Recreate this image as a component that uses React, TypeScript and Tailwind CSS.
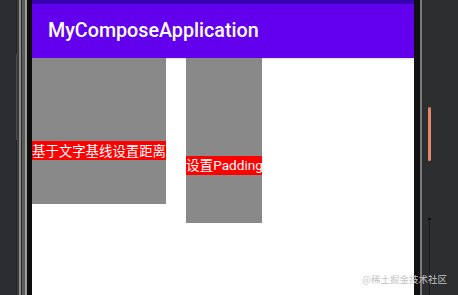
import React from "react";

export default function App() {
  return (
    <div className="relative flex h-[295px] w-[458px] overflow-hidden bg-[#2b2d30]">
      {/* left bezel */}
      <div className="flex h-full w-[32px] shrink-0">
        <div className="w-[16px] bg-[#2b2d30]" />
        <div className="flex w-[1px] flex-col">
          <div className="h-[54px] bg-[#232427]" />
          <div className="h-[86px] bg-[#4a4c4f]" />
          <div className="flex-1 bg-[#232427]" />
        </div>
        <div className="w-[2px] bg-[#3a3b3d]" />
        <div className="w-[2px] bg-[#8a8a8a]" />
        <div className="w-[1px] bg-[#2a2a2a]" />
        <div className="w-[3px] bg-[#5c5c5c]" />
        <div className="w-[2px] bg-[#9a9a9a]" />
        <div className="w-[5px] bg-[#0e0e0e]" />
      </div>

      {/* screen */}
      <div className="flex h-full w-[382px] shrink-0 flex-col bg-white">
        <div className="h-[4px] bg-[#3700b3]" />
        <div className="flex h-[54px] items-center bg-[#6200ee] px-4 shadow-sm">
          <span className="font-['Roboto',sans-serif] text-[19.7px] font-medium text-white">
            MyComposeApplication
          </span>
        </div>
        <div className="flex items-start gap-[20px]">
          <div className="flex h-[146px] w-[134px] flex-col bg-[#898989] pt-[83px]">
            <span className="block h-[19px] bg-[#ff0000] text-center font-['Noto_Sans_CJK_SC',sans-serif] text-[13.4px] leading-[19px] whitespace-nowrap text-white">
              基于文字基线设置距离
            </span>
          </div>
          <div className="flex h-[165px] w-[76px] flex-col bg-[#898989] pt-[98px]">
            <span className="block h-[19px] bg-[#ff0000] text-center font-['Roboto','Noto_Sans_CJK_SC',sans-serif] text-[13.6px] leading-[19px] whitespace-nowrap text-white">
              设置Padding
            </span>
          </div>
        </div>
      </div>

      {/* right bezel */}
      <div className="flex h-full flex-1">
        <div className="w-[6px] bg-[#111111]" />
        <div className="w-[2px] bg-[#7a7a7a]" />
        <div className="flex flex-1 flex-col bg-[#2d2e30] pl-[6px] pt-[107px]">
          <div className="h-[54px] w-[3px] rounded-full bg-[#e3866a]" />
          <div className="mt-[57px] h-[2px] w-[3px] bg-[#111111]" />
          <div className="ml-[1px] w-[1px] flex-1 bg-[#1a1a1a]" />
        </div>
      </div>

      <span className="absolute left-[362px] top-[273px] font-['Noto_Sans_CJK_SC',sans-serif] text-[9.5px] leading-[12px] whitespace-nowrap text-[#c4c4c4]">
        @稀土掘金技术社区
      </span>
    </div>
  );
}
